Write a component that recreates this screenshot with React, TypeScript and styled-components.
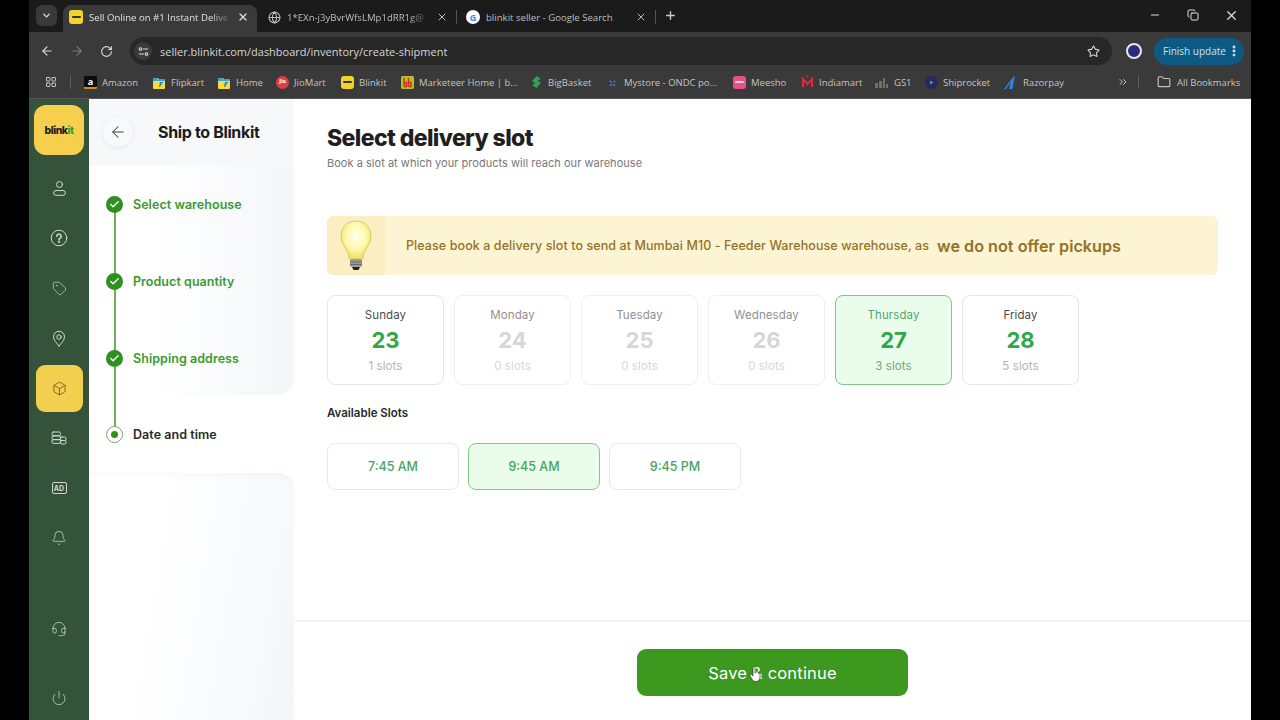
import React from "react";
import styled, { createGlobalStyle } from "styled-components";
import {
  ArrowLeft, ArrowRight, RotateCw, Star, X, Plus, Minus, ChevronDown, EllipsisVertical, Globe, LayoutGrid,
  Folder, ChevronsRight, Check, Tag, Box, Bell, Headset, Power, Copy,
} from "lucide-react";

const Global = createGlobalStyle`
  html, body { margin: 0; padding: 0; background: #000; }
  * { box-sizing: border-box; }
`;
const ui = `"Open Sans", "Noto Sans", sans-serif`;
const brand = `Inter, "Open Sans", sans-serif`;

const Screen = styled.div`
  width: 1280px; height: 720px; background: #000; padding: 0 29px; overflow: hidden;
`;
const Win = styled.div`
  width: 1222px; height: 720px; display: flex; flex-direction: column; font-family: ${ui};
`;
const TabStrip = styled.div`
  height: 32px; background: #1b1b1b; display: flex; align-items: flex-end; padding-left: 7px; flex: none;
`;
const TabMenu = styled.div`
  width: 21px; height: 21px; margin: 0 6px 6px 0; border-radius: 6px; background: #3a3a3a; color: #ddd;
  display: flex; align-items: center; justify-content: center; flex: none;
`;
const Tab = styled.div<{ $active?: boolean; $w: number; $pl: number }>`
  width: ${(p) => p.$w}px; height: 27px; border-radius: 8px 8px 0 0; background: ${(p) => (p.$active ? "#3a3a3a" : "transparent")};
  color: ${(p) => (p.$active ? "#e0e0e0" : "#bdbdbd")}; font-size: 9.6px; display: flex; align-items: center; padding: 0 8px 3px ${(p) => p.$pl}px; gap: 6px; flex: none;
  white-space: nowrap;
`;
const TabTitle = styled.span<{ $fade?: boolean }>`
  flex: 1; min-width: 0;
  ${(p) => (p.$fade ? "mask-image: linear-gradient(90deg, #000 0, #000 122px, rgba(0,0,0,.15) 140px);" : "")}
`;
const TabSep = styled.div`
  width: 1px; height: 14px; background: #555; margin: 0 1px 8px 0; flex: none;
`;
const NewTab = styled.div`
  color: #ccc; display: flex; margin-bottom: 10px; margin-left: 7px;
`;
const WinControls = styled.div`
  margin-left: auto; display: flex; gap: 25.5px; align-items: center; color: #ddd; height: 30px; padding-right: 12px; align-self: flex-start;
`;
const Toolbar = styled.div`
  height: 34px; background: #3a3a3a; display: flex; align-items: center; padding: 4px 7px 0 11px; color: #ddd; flex: none;
`;
const NavIcon = styled.div<{ $dim?: boolean; $w: number }>`
  width: ${(p) => p.$w}px; display: flex; color: ${(p) => (p.$dim ? "#7c7c7c" : "#d8d8d8")}; flex: none;
`;
const Address = styled.div`
  flex: 1; height: 28px; border-radius: 14px; background: #272727; display: flex; align-items: center;
  padding: 0 12px 0 4px; font-size: 11px; color: #d6d6d6; gap: 8px;
`;
const SiteBtn = styled.div`
  width: 18px; height: 18px; border-radius: 50%; background: #3b3b3b; display: flex; align-items: center; justify-content: center; color: #ddd;
`;
const Avatar = styled.div`
  width: 16px; height: 16px; border-radius: 50%; background: #2c2a7c; border: 2px solid #e8e8f0; margin: 0 12px 0 14px; flex: none;
`;
const UpdatePill = styled.div`
  height: 27px; width: 90px; border-radius: 14px; background: #0c5a84; color: #cfe2ee; font-size: 10px; display: flex; align-items: center;
  padding: 0 3px 0 9px; justify-content: space-between; white-space: nowrap; flex: none;
`;
const Bookmarks = styled.div`
  height: 33px; background: #3a3a3a; display: flex; align-items: center; padding: 0 0 0 16px; color: #c4c4c4; font-size: 9.5px; flex: none;
  border-bottom: 1px solid #555; white-space: nowrap;
`;
const BmSep = styled.div<{ $l: number; $r: number }>`
  width: 1px; height: 14px; background: #5c5c5c; margin: 0 ${(p) => p.$r}px 0 ${(p) => p.$l}px; flex: none;
`;
const Bm = styled.div<{ $w: number }>`
  width: ${(p) => p.$w}px; display: flex; align-items: center; gap: 5px; white-space: nowrap; flex: none;
`;
const Fav = styled.div<{ $bg: string; $c?: string; $round?: boolean; $size?: number }>`
  width: ${(p) => p.$size ?? 13}px; height: ${(p) => p.$size ?? 13}px; flex: none; border-radius: ${(p) => (p.$round ? "50%" : "3px")}; background: ${(p) => p.$bg}; color: ${(p) => p.$c || "#fff"};
  font-size: 9px; font-weight: 700; display: flex; align-items: center; justify-content: center; overflow: hidden; line-height: 1;
`;
const AmazonFav = styled(Fav)`
  box-shadow: inset 0 -2px 0 #d98a1c; border-radius: 1px; padding-bottom: 2px;
`;
const TinyText = styled.span`
  font-size: 5.5px; font-weight: 700; letter-spacing: -0.2px;
`;
const FavDot = styled.div<{ $c?: string }>`
  width: 9px; height: 2px; background: ${(p) => p.$c || "#333"}; border-radius: 1px;
`;
const Page = styled.div`
  flex: 1; display: flex; background: #fff; min-height: 0; font-family: ${brand};
`;
const Rail = styled.div`
  width: 60px; flex: none; background: #34533a; display: flex; flex-direction: column; align-items: center; padding-top: 6px; color: #dfe8df;
`;
const Logo = styled.div`
  width: 50px; height: 50px; border-radius: 12px; background: #f6d04d; display: flex; align-items: center; justify-content: center;
  font-size: 10.5px; font-weight: 800; letter-spacing: -0.5px; color: #222; margin-bottom: 8px; flex: none;
`;
const LogoAccent = styled.span`
  color: #2e9e2e;
`;
const RailItem = styled.div<{ $active?: boolean; $gap?: number }>`
  width: 47px; height: 47px; border-radius: 9px; flex: none; margin-bottom: 1.5px; margin-top: ${(p) => p.$gap ?? 1.5}px; display: flex; align-items: center; justify-content: center;
  background: ${(p) => (p.$active ? "#f3cf4e" : "transparent")}; color: ${(p) => (p.$active ? "#5a4a18" : "#cfdacf")};
`;
const AdBox = styled.div`
  width: 15px; height: 12px; border: 1px solid #cfdacf; border-radius: 2px; font-size: 7px; font-weight: 700; display: flex; align-items: center; justify-content: center;
`;
const StepsCol = styled.div`
  width: 205px; flex: none; display: flex; flex-direction: column;
`;
const StepsHead = styled.div`
  height: 66px; background: #f6f8fa; display: flex; align-items: center; padding-left: 14px; gap: 25px;
`;
const BackBtn = styled.div`
  width: 30px; height: 30px; border-radius: 50%; background: #f8f9fa; box-shadow: 0 1px 5px rgba(0,0,0,.08); display: flex; align-items: center; justify-content: center; color: #444;
`;
const HeadTitle = styled.div`
  font-size: 16px; font-weight: 700; color: #1c1c1c; letter-spacing: -0.35px; white-space: nowrap;
`;
const StepsDone = styled.div`
  height: 230px; padding-top: 1px; background: linear-gradient(90deg, #fff 30%, #f4f6f9 100%); border-radius: 0 0 16px 0; position: relative; z-index: 1;
`;
const StepsActive = styled.div`
  height: 78px; padding-top: 1px; background: #fff;
`;
const StepsRest = styled.div`
  flex: 1; background: linear-gradient(100deg, #fff 30%, #f4f6f9 100%); border-radius: 0 16px 0 0; box-shadow: inset 0 6px 6px -4px rgba(0,0,0,.03);
`;
const Step = styled.div<{ $line?: boolean; $active?: boolean }>`
  height: 77px; display: flex; align-items: center; padding-left: 17px; gap: 10px; position: relative;
  font-size: 12.5px; font-weight: 600; color: ${(p) => (p.$active ? "#2a2a2a" : "#3a9a2f")}; letter-spacing: 0.05px;
  &::after {
    content: ""; display: ${(p) => (p.$line ? "block" : "none")}; position: absolute; left: 25px; top: 38px; width: 1.5px; height: 77px; background: #6fae5e;
  }
`;
const DoneDot = styled.div`
  width: 17px; height: 17px; border-radius: 50%; background: #2f8f1f; color: #fff; display: flex; align-items: center; justify-content: center; position: relative; z-index: 2; flex: none;
`;
const CurrentDot = styled.div`
  width: 17px; height: 17px; border-radius: 50%; background: #fff; border: 1px solid #6fae5e; display: flex; align-items: center; justify-content: center; flex: none; position: relative; z-index: 2;
  &::after { content: ""; width: 7px; height: 7px; border-radius: 50%; background: #2f8f1f; }
`;
const Main = styled.div`
  flex: 1; display: flex; flex-direction: column; min-width: 0;
`;
const Content = styled.div`
  flex: 1; padding: 25px 33px 0 33px; display: flex; flex-direction: column;
`;
const Title = styled.h1`
  margin: 0; font-size: 23px; font-weight: 800; line-height: 28px; color: #1f1f1f; letter-spacing: -0.6px;
`;
const Sub = styled.p`
  margin: 3px 0 0; font-size: 11px; line-height: 16px; color: #777; letter-spacing: 0.03px;
`;
const Banner = styled.div`
  margin-top: 45px; height: 59px; background: #fdf4d3; border-radius: 6px; display: flex; align-items: center; overflow: hidden; color: #937326; font-size: 12.5px; font-weight: 500; letter-spacing: 0.08px;
`;
const BulbCell = styled.div`
  width: 58px; height: 100%; background: #fbeec0; display: flex; align-items: center; justify-content: center; flex: none; margin-right: 21px;
`;
const BannerStrong = styled.strong`
  font-size: 16.2px; font-weight: 600; margin-left: 8px; letter-spacing: 0;
`;
const DayRow = styled.div`
  margin-top: 20px; display: flex; gap: 10px;
`;
const DayCard = styled.div<{ $sel?: boolean; $off?: boolean }>`
  width: 117px; height: 90px; border-radius: 8px; border: 1px solid ${(p) => (p.$sel ? "#86c58a" : p.$off ? "#f0f0f0" : "#e6e6e6")};
  background: ${(p) => (p.$sel ? "#e9fdea" : "#fff")}; display: flex; flex-direction: column; align-items: center; padding-top: 12px;
`;
const DayName = styled.div<{ $sel?: boolean; $off?: boolean }>`
  font-size: 11.5px; line-height: 15px; letter-spacing: 0.1px; color: ${(p) => (p.$sel ? "#55a56c" : p.$off ? "#8f8f8f" : "#4a4a4a")};
`;
const DayNum = styled.div<{ $off?: boolean }>`
  font-size: 22px; line-height: 26px; margin-top: 4px; font-weight: 700; color: ${(p) => (p.$off ? "#d6d6d6" : "#2fa84a")};
`;
const DaySlots = styled.div<{ $sel?: boolean; $off?: boolean }>`
  font-size: 11.5px; line-height: 15px; margin-top: 6px; letter-spacing: 0.1px; color: ${(p) => (p.$sel ? "#6fa67f" : p.$off ? "#d6d6d6" : "#b4b4b4")};
`;
const Avail = styled.div`
  margin-top: 21px; font-size: 11.5px; line-height: 15px; font-weight: 600; color: #2a2a2a;
`;
const SlotRow = styled.div`
  margin-top: 22px; display: flex; gap: 9px;
`;
const Slot = styled.div<{ $sel?: boolean }>`
  width: 132px; height: 47px; border-radius: 8px; border: 1px solid ${(p) => (p.$sel ? "#86c58a" : "#e8e8e8")}; background: ${(p) => (p.$sel ? "#e9fdea" : "#fff")};
  color: #4aa262; font-size: 12.5px; font-weight: 500; display: flex; align-items: center; justify-content: center;
`;
const Footer = styled.div`
  height: 100px; flex: none; border-top: 2px solid #f3f3f3; display: flex; justify-content: center; padding-top: 27px;
`;
const SaveBtn = styled.div`
  width: 271px; height: 47px; border-radius: 9px; background: #3c981e; color: #fff; font-size: 16.5px; font-weight: 400; letter-spacing: 0.2px; display: flex; align-items: center; justify-content: center; position: relative;
`;
const Cursor = styled.svg`
  position: absolute; left: 112px; top: 17px;
`;

const Icon = ({ w = 16, h = 16, children }: { w?: number; h?: number; children: React.ReactNode }) => (
  <svg width={w} height={h} viewBox={`0 0 ${w} ${h}`} fill="none" stroke="currentColor" strokeWidth="1" strokeLinecap="round" strokeLinejoin="round">
    {children}
  </svg>
);
const UserIcon = () => (
  <Icon w={15} h={16}>
    <circle cx="7.500" cy="4.500" r="3" />
    <path d="M4 10.500h7a2.400 2.400 0 0 1 0 4.800H4a2.400 2.400 0 0 1 0-4.800z" />
  </Icon>
);
const HelpIcon = () => (
  <Icon w={18} h={18}>
    <circle cx="9" cy="9" r="7.800" />
    <path d="M6.800 7.200a2.200 2.200 0 1 1 3.400 1.900c-.8.500-1.200.9-1.200 1.800" strokeWidth="1.600" />
    <circle cx="9" cy="13" r=".6" fill="currentColor" />
  </Icon>
);
const PinIcon = () => (
  <Icon w={14} h={17}>
    <path d="M7 16C4.500 13 1.500 10 1.500 6.800a5.500 5.500 0 0 1 11 0C12.500 10 9.500 13 7 16z" />
    <circle cx="7" cy="7" r="2.200" />
  </Icon>
);
const CoinsIcon = () => (
  <Icon w={16} h={14}>
    <rect x="1" y="1" width="8.500" height="3.800" rx="1.400" />
    <rect x="1" y="4.800" width="8.500" height="3.800" rx="1.400" />
    <rect x="1" y="8.600" width="8.500" height="3.800" rx="1.400" />
    <rect x="9.500" y="6" width="5.500" height="3.500" rx="1.400" />
    <rect x="9.500" y="9.500" width="5.500" height="3.500" rx="1.400" />
  </Icon>
);
const SiteIcon = () => (
  <svg width="11" height="11" viewBox="0 0 11 11" fill="none" stroke="currentColor" strokeWidth="1.100">
    <circle cx="2.500" cy="3" r="1.300" />
    <path d="M5 3h5M1 8h5" />
    <circle cx="8.500" cy="8" r="1.300" />
  </svg>
);
const FlipkartFav = () => (
  <svg width="14" height="13" viewBox="0 0 14 13">
    <path d="M1 2h5l1 1.500h6V12a1 1 0 0 1-1 1H2a1 1 0 0 1-1-1z" fill="#f4dc3a" />
    <path d="M1 2h4l1 1.500h7V5H1z" fill="#3aa0d8" />
    <path d="M7 11l1-5h3l-.2 1.200H9l-.2 1H10l-.2 1H8.600L8.300 11z" fill="#2874c0" />
  </svg>
);
const BBFav = () => (
  <svg width="13" height="13" viewBox="0 0 13 13">
    <rect width="13" height="13" rx="1.500" fill="#b8bd2a" />
    <path d="M3 2v8.500M3 6.500h2.500v4H3M7.500 2v8.500M7.500 6.500H10v4H7.500" fill="none" stroke="#c8341c" strokeWidth="1.500" />
  </svg>
);
const BigBasketFav = () => (
  <svg width="13" height="14" viewBox="0 0 13 14">
    <path d="M6.500 1l4.500 2.800-3 1.600L10.800 8 6.500 13 2 10.200l3-1.600L2.200 6z" fill="#2e9e58" />
  </svg>
);
const MystoreFav = () => (
  <svg width="13" height="13" viewBox="0 0 13 13">
    <path d="M4 5l5 5M9 5l-5 5" stroke="#6f8fe0" strokeWidth="1.500" strokeDasharray="1.500 1" />
    <circle cx="6.500" cy="7.500" r="1.200" fill="#30408a" />
  </svg>
);
const IndiamartFav = () => (
  <svg width="13" height="14" viewBox="0 0 13 14">
    <path d="M2 12V4l4.500 5L11 4v8" fill="none" stroke="#d62c3c" strokeWidth="2.200" />
    <circle cx="6.500" cy="1.500" r="1" fill="#d62c3c" />
  </svg>
);
const GSFav = () => (
  <svg width="15" height="13" viewBox="0 0 15 13">
    <path d="M1 12V7h3v5zM5 12V5h3v7zM9 12V2h2v10zM12 12V8h2v4z" fill="#6f6f6f" />
  </svg>
);
const ShipFav = () => (
  <svg width="13" height="13" viewBox="0 0 13 13">
    <circle cx="6.500" cy="6.500" r="6.500" fill="#2f2460" />
    <path d="M5.300 4.800l3 1.700-3 1.700z" fill="#49d08a" />
  </svg>
);
const RazorFav = () => (
  <svg width="14" height="15" viewBox="0 0 14 15">
    <path d="M11 0L8.500 14H5l1.800-7L2 14H0L6 6z" fill="#2e82d8" />
  </svg>
);

const bookmarks: [string, number, React.ReactNode][] = [
  ["Amazon", 68, <AmazonFav $bg="#0c0c0c" $c="#fff">a</AmazonFav>],
  ["Flipkart", 65, <FlipkartFav />],
  ["Home", 59, <FlipkartFav />],
  ["JioMart", 65, <Fav $bg="#d8404a" $round><TinyText>Jio</TinyText></Fav>],
  ["Blinkit", 60, <Fav $bg="#f2d32c"><FavDot /></Fav>],
  ["Marketeer Home | b...", 129, <BBFav />],
  ["BigBasket", 76, <BigBasketFav />],
  ["Mystore - ONDC po...", 127, <MystoreFav />],
  ["Meesho", 68, <Fav $bg="#e8508c"><FavDot $c="#f8c8d8" /></Fav>],
  ["Indiamart", 73, <IndiamartFav />],
  ["GS1", 51, <GSFav />],
  ["Shiprocket", 79, <ShipFav />],
  ["Razorpay", 113, <RazorFav />],
];
const days = [
  { d: "Sunday", n: 23, s: 1 },
  { d: "Monday", n: 24, s: 0 },
  { d: "Tuesday", n: 25, s: 0 },
  { d: "Wednesday", n: 26, s: 0 },
  { d: "Thursday", n: 27, s: 3, sel: true },
  { d: "Friday", n: 28, s: 5 },
];

const Bulb = () => (
  <svg width="34" height="52" viewBox="0 0 34 52">
    <defs>
      <radialGradient id="g" cx="50%" cy="40%" r="55%">
        <stop offset="0%" stopColor="#fffff0" />
        <stop offset="60%" stopColor="#fff9b0" />
        <stop offset="100%" stopColor="#f4e36a" />
      </radialGradient>
    </defs>
    <path d="M17 1C8 1 2 8 2 16c0 8 7 13 8.500 23h13C25 29 32 24 32 16 32 8 26 1 17 1z" fill="url(#g)" stroke="#d8c860" strokeWidth="1" />
    <rect x="11" y="39" width="12" height="8" rx="1.500" fill="#9a9a9a" />
    <path d="M11 42h12M11 44.500h12" stroke="#6c6c6c" strokeWidth="1" />
    <path d="M13 47h8l-1.500 3h-5z" fill="#222" />
  </svg>
);

export default function App() {
  return (
    <Screen>
      <Global />
      <Win>
        <TabStrip>
          <TabMenu><ChevronDown size={11} strokeWidth={3} /></TabMenu>
          <Tab $active $w={194} $pl={6}>
            <Fav $bg="#f2d32c" $size={14}><FavDot /></Fav>
            <TabTitle $fade>Sell Online on #1 Instant Delive</TabTitle>
            <X size={12} strokeWidth={2.5} />
          </Tab>
          <Tab $w={199} $pl={11}>
            <Globe size={13} />
            <TabTitle $fade>1*EXn-j3yBvrWfsLMp1dRR1g@</TabTitle>
            <X size={12} />
          </Tab>
          <TabSep />
          <Tab $w={197} $pl={8}>
            <Fav $bg="#fff" $c="#4285f4" $round $size={14}>G</Fav>
            <TabTitle>blinkit seller - Google Search</TabTitle>
            <X size={12} />
          </Tab>
          <TabSep />
          <NewTab><Plus size={13} strokeWidth={2.5} /></NewTab>
          <WinControls>
            <Minus size={12} />
            <Copy size={12} />
            <X size={15} />
          </WinControls>
        </TabStrip>
        <Toolbar>
          <NavIcon $w={30}><ArrowLeft size={14} /></NavIcon>
          <NavIcon $dim $w={30}><ArrowRight size={14} /></NavIcon>
          <NavIcon $w={30}><RotateCw size={13} /></NavIcon>
          <Address>
            <SiteBtn><SiteIcon /></SiteBtn>
            <span>seller.blinkit.com/dashboard/inventory/create-shipment</span>
            <Star size={13} style={{ marginLeft: "auto" }} />
          </Address>
          <Avatar />
          <UpdatePill>Finish update<EllipsisVertical size={14} strokeWidth={3} /></UpdatePill>
        </Toolbar>
        <Bookmarks>
          <LayoutGrid size={12} />
          <BmSep $l={13} $r={13} />
          {bookmarks.map(([t, w, ic]) => (
            <Bm key={t} $w={w}>{ic}{t}</Bm>
          ))}
          <ChevronsRight size={12} />
          <BmSep $l={9} $r={18} />
          <Folder size={14} style={{ marginRight: 6 }} />
          All Bookmarks
        </Bookmarks>
        <Page>
          <Rail>
            <Logo>blink<LogoAccent>it</LogoAccent></Logo>
            <RailItem><UserIcon /></RailItem>
            <RailItem><HelpIcon /></RailItem>
            <RailItem><Tag size={15} strokeWidth={1.1} /></RailItem>
            <RailItem><PinIcon /></RailItem>
            <RailItem $active><Box size={15} strokeWidth={1.2} /></RailItem>
            <RailItem><CoinsIcon /></RailItem>
            <RailItem><AdBox>AD</AdBox></RailItem>
            <RailItem><Bell size={16} strokeWidth={1.1} /></RailItem>
            <RailItem $gap={42.5}><Headset size={16} strokeWidth={1.1} /></RailItem>
            <RailItem $gap={20.5}><Power size={16} strokeWidth={1.1} /></RailItem>
          </Rail>
          <StepsCol>
            <StepsHead>
              <BackBtn><ArrowLeft size={18} strokeWidth={1.4} /></BackBtn>
              <HeadTitle>Ship to Blinkit</HeadTitle>
            </StepsHead>
            <StepsDone>
              {["Select warehouse", "Product quantity", "Shipping address"].map((s) => (
                <Step key={s} $line><DoneDot><Check size={11} strokeWidth={3} /></DoneDot>{s}</Step>
              ))}
            </StepsDone>
            <StepsActive>
              <Step $active><CurrentDot />Date and time</Step>
            </StepsActive>
            <StepsRest />
          </StepsCol>
          <Main>
            <Content>
              <Title>Select delivery slot</Title>
              <Sub>Book a slot at which your products will reach our warehouse</Sub>
              <Banner>
                <BulbCell><Bulb /></BulbCell>
                Please book a delivery slot to send at Mumbai M10 - Feeder Warehouse warehouse, as
                <BannerStrong>we do not offer pickups</BannerStrong>
              </Banner>
              <DayRow>
                {days.map((d) => (
                  <DayCard key={d.d} $sel={d.sel} $off={d.s === 0}>
                    <DayName $sel={d.sel} $off={d.s === 0}>{d.d}</DayName>
                    <DayNum $off={d.s === 0}>{d.n}</DayNum>
                    <DaySlots $sel={d.sel} $off={d.s === 0}>{d.s} slots</DaySlots>
                  </DayCard>
                ))}
              </DayRow>
              <Avail>Available Slots</Avail>
              <SlotRow>
                <Slot>7:45 AM</Slot>
                <Slot $sel>9:45 AM</Slot>
                <Slot>9:45 PM</Slot>
              </SlotRow>
            </Content>
            <Footer>
              <SaveBtn>
                Save &amp; continue
                <Cursor width="12" height="16" viewBox="0 0 12 16">
                  <path d="M4 1.500a1 1 0 0 1 2 0V7l1-.5V6a1 1 0 0 1 2 0v1l1 .3a1 1 0 0 1 1 1V11c0 2.500-1.500 4.500-4 4.500-2 0-3.500-1-4.500-3L1 9.500c-.5-1 .5-1.700 1.300-1L4 10z" fill="#fff" stroke="#222" strokeWidth=".6" />
                </Cursor>
              </SaveBtn>
            </Footer>
          </Main>
        </Page>
      </Win>
    </Screen>
  );
}
